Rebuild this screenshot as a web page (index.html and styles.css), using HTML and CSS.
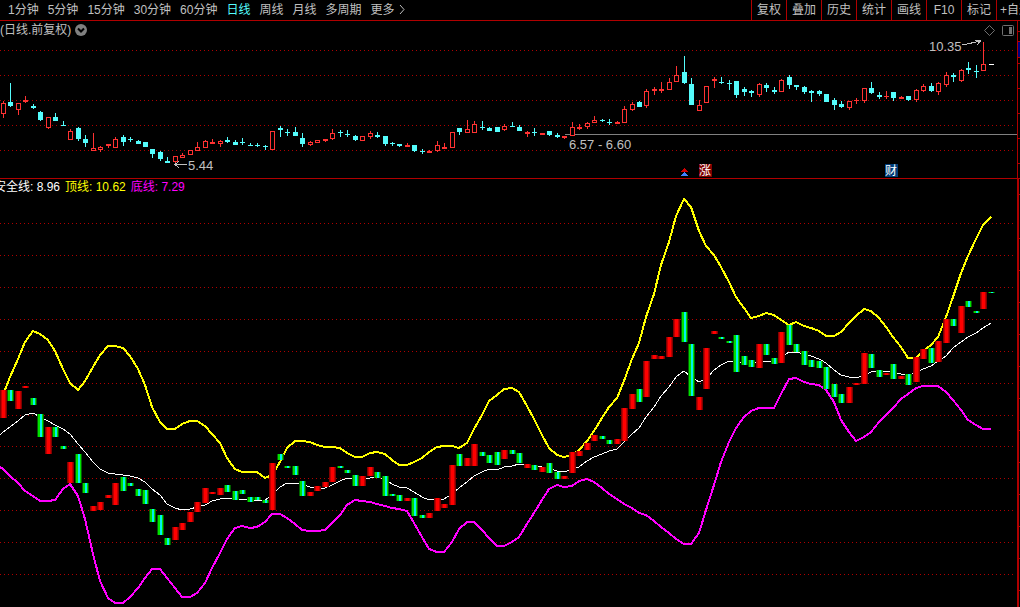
FILE: index.html
```
<!DOCTYPE html>
<html lang="zh-CN">
<head>
    <meta charset="UTF-8">
    <meta name="viewport" content="width=device-width, initial-scale=1.0">
    <title>日线</title>
    <link rel="stylesheet" href="styles.css">
</head>
<body>

    <div class="toolbar">
        <nav class="periods">
            <button>1分钟</button>
            <button>5分钟</button>
            <button>15分钟</button>
            <button>30分钟</button>
            <button>60分钟</button>
            <button class="active">日线</button>
            <button>周线</button>
            <button>月线</button>
            <button>多周期</button>
            <button class="more">更多<svg width="6" height="11" viewBox="0 0 6 11"><path d="M1 1l4 4.500-4 4.500"/></svg></button>
        </nav>
        <div class="tools">
            <button>复权</button>
            <button>叠加</button>
            <button>历史</button>
            <button>统计</button>
            <button>画线</button>
            <button>F10</button>
            <button>标记</button>
            <button class="watch">+自选</button>
        </div>
    </div>

    <div class="main">
        <div class="panes">
            <section class="pane price-pane">
                <div class="pane-head">
                    <span class="stock">(日线.前复权)</span>
                    <svg class="drop" width="12" height="12" viewBox="0 0 12 12"><circle cx="6" cy="6" r="6"/><path d="M3 4.500l3 3 3-3"/></svg>
                    <svg class="diamond" width="11" height="11" viewBox="0 0 11 11"><path d="M5.500 .5l5 5-5 5-5-5z"/></svg>
                    <svg class="panel" width="12" height="11" viewBox="0 0 12 11"><rect class="frame" x=".5" y=".5" width="11" height="10" rx="1"/><rect class="fill" x="7" y="2" width="3" height="7"/></svg>
                </div>
                <svg class="chart" id="priceChart"></svg>
            </section>
            <section class="pane line-pane">
                <div class="legend">
                    <span class="safe">安全线: 8.96</span>
                    <span class="top">顶线: 10.62</span>
                    <span class="bottom">底线: 7.29</span>
                </div>
                <svg class="chart" id="lineChart"></svg>
            </section>
        </div>
        <aside class="axis">
            <div class="axis-top"><span class="cursor-price"></span></div>
            <div class="axis-bottom"></div>
        </aside>
    </div>

    <script src="chart.js"></script>
</body>
</html>
```
FILE: styles.css
```
* {
    box-sizing: border-box;
}
body {
    margin: 0;
    height: 100vh;
    display: flex;
    flex-direction: column;
    overflow: hidden;
    background: #000;
    color: #c0c0c0;
    font-family: "Liberation Sans", "Noto Sans CJK SC", sans-serif;
    font-size: 12px;
}
button {
    background: none;
    border: none;
    padding: 0;
    color: inherit;
    font: inherit;
    line-height: 20px;
    white-space: nowrap;
    cursor: pointer;
}
.toolbar {
    display: flex;
    justify-content: space-between;
    height: 21px;
    flex: none;
    border-bottom: 1px solid #b00000;
}
.periods {
    display: flex;
    gap: 9px;
    padding-left: 8px;
}
.periods .active {
    color: #54fcfc;
}
.more svg {
    margin-left: 4px;
    vertical-align: -1px;
    fill: none;
    stroke: #c0c0c0;
}
.tools {
    display: flex;
    width: 269px;
    overflow: hidden;
}
.tools button {
    flex: none;
    width: 35px;
    border-left: 1px solid #b00000;
}
.tools .watch {
    width: 44px;
    padding-left: 3px;
    text-align: left;
}
.main {
    flex: 1;
    display: flex;
    min-height: 0;
}
.panes {
    flex: 1;
    min-width: 0;
    display: flex;
    flex-direction: column;
}
.pane {
    position: relative;
}
.price-pane {
    height: 158px;
    flex: none;
    border-bottom: 1px solid #b00000;
}
.line-pane {
    flex: 1;
    min-height: 0;
    overflow: hidden;
}
/* captions lie over the chart */
.pane-head,
.legend {
    position: absolute;
    left: 0;
    right: 0;
    top: 0;
    display: flex;
    align-items: center;
    line-height: 18px;
    white-space: nowrap;
}
.pane-head {
    padding-right: 3px;
}
.drop {
    margin-left: 4px;
    fill: #808080;
}
.drop path {
    fill: none;
    stroke: #000;
    stroke-width: 2;
}
.diamond {
    margin-left: auto;
    fill: none;
    stroke: #707070;
}
.panel {
    margin-left: 7px;
}
.frame {
    fill: none;
    stroke: #707070;
}
.fill {
    fill: #707070;
}
.legend {
    gap: 5px;
    margin-left: -6px;
    line-height: 16px;
}
.safe {
    color: #fff;
}
.top {
    color: #ff0;
}
.bottom {
    color: #f0f;
}
.chart {
    display: block;
    width: 100%;
    height: 100%;
    shape-rendering: crispEdges;
}
.chart text {
    fill: #c0c0c0;
    font-size: 13px;
}
.chart .badge-text {
    fill: #fff;
    font-size: 12px;
}
.grid {
    stroke: #b00000;
    stroke-dasharray: 1 3;
}
.wick-up {
    fill: #ff3232;
}
.body-up {
    fill: #000;
    stroke: #ff3232;
}
.down {
    fill: #54fcfc;
}
.flat {
    fill: #fff;
}
.cost {
    stroke: #808080;
}
.arrow {
    fill: none;
    stroke: #c0c0c0;
}
.line {
    fill: none;
    stroke-width: 2;
}
.line-safe {
    stroke: #fff;
    stroke-width: 1;
}
.line-top {
    stroke: #ff0;
}
.line-bottom {
    stroke: #f0f;
}
.axis {
    width: 3px;
    flex: none;
    display: flex;
    flex-direction: column;
    border-left: 1px solid #b00000;
}
.axis-top {
    height: 158px;
    padding-top: 20px;
    border-bottom: 1px solid #b00000;
    background: repeating-linear-gradient(#000 0 24px, #b00000 24px 25px) 0 18px;
}
.cursor-price {
    display: block;
    height: 17px;
    background: #000080;
    border-top: 1px solid #b00000;
    border-bottom: 1px solid #b00000;
}
.axis-bottom {
    flex: 1;
    border-left: 1px solid #b00000;
    background: repeating-linear-gradient(#000 0 31px, #b00000 31px 32px) 0 28px;
}
```
FILE: chart.js
```
// daily bars: [up, high, top of body, bottom of body, low]
const candles = [
    [1,101,103,114,118],[0,83,102,106,107],[1,103,103,110,115],[1,96,100,102,103],[0,104,106,108,109],
    [0,111,112,120,121],[1,117,117,128,129],[0,113,117,121,121],[0,121,125,126,126],[1,129,131,140,140],
    [0,127,128,139,141],[0,135,139,143,147],[1,133,148,151,151],[1,146,147,150,152],[1,144,144,146,148],
    [1,137,139,148,148],[0,135,137,142,146],[0,137,139,140,142],[0,140,141,144,144],[0,142,142,147,147],
    [0,149,149,154,158],[0,151,152,159,161],[0,157,161,163,163],[1,156,156,162,163],[1,153,155,158,158],
    [1,150,150,155,155],[1,142,147,151,151],[1,140,141,148,148],[1,139,142,144,144],[1,140,141,144,147],
    [0,137,140,142,143],[0,140,142,145,145],[0,138,142,143,145],[0,143,145,146,146],[0,143,145,146,147],
    [0,145,146,147,150],[1,131,131,150,150],[0,126,128,130,137],[0,129,132,133,136],[0,127,132,136,136],
    [0,133,138,144,147],[1,141,142,145,146],[1,140,140,143,143],[1,139,139,141,142],[1,129,133,139,140],
    [0,130,132,133,137],[0,130,134,135,137],[0,135,136,140,141],[1,136,136,141,141],[1,131,133,137,139],
    [0,132,135,137,138],[0,136,136,144,146],[0,142,143,144,146],[0,144,144,146,147],[1,143,145,147,147],
    [0,145,145,151,152],[0,149,151,152,154],[1,150,151,153,153],[1,141,145,151,152],[1,143,147,149,149],
    [1,132,132,148,148],[0,128,128,132,135],[1,120,129,133,133],[1,121,124,133,133],[0,121,127,128,130],
    [0,127,128,131,131],[0,127,127,132,132],[1,124,126,130,131],[0,122,126,127,127],[0,125,127,131,131],
    [1,131,132,134,137],[0,128,132,133,136],[1,133,133,135,135],[0,131,131,135,136],[0,133,135,137,138],
    [1,136,136,138,139],[1,122,127,136,136],[1,124,127,129,130],[1,122,123,127,129],[1,116,120,123,123],
    [0,119,120,121,122],[0,119,122,123,125],[1,121,122,124,124],[1,106,109,123,123],[1,102,104,110,111],
    [0,101,102,107,107],[1,89,91,106,108],[1,87,89,91,95],[1,82,89,91,93],[1,78,82,90,90],
    [1,66,75,82,82],[0,56,72,83,84],[0,78,84,105,105],[1,100,105,111,111],[1,86,86,103,103],
    [1,77,79,81,88],[0,77,82,83,84],[0,80,83,84,90],[0,81,81,95,98],[0,87,89,92,96],
    [0,90,91,93,97],[1,83,84,95,97],[0,83,85,88,92],[0,87,90,92,94],[1,79,80,92,92],
    [0,75,77,85,89],[0,85,85,87,90],[0,86,87,92,94],[0,90,91,93,102],[0,90,91,94,96],
    [0,94,94,102,102],[0,98,100,105,110],[0,101,104,107,108],[1,101,101,108,110],[1,98,100,101,104],
    [1,88,88,101,103],[0,82,88,93,94],[0,92,95,97,99],[1,91,96,97,99],[0,92,92,98,101],
    [1,96,97,99,99],[0,96,96,100,101],[1,89,90,100,102],[1,84,86,91,92],[0,83,86,91,92],
    [1,82,83,92,95],[1,72,75,85,87],[0,73,75,77,82],[1,69,70,81,82],[0,62,68,70,74],
    [0,65,71,72,78],[1,42,64,71,71],[2,64,64,65,65]
];

// indicator columns: [up, top, bottom]
const columns = [
    [1,390,418],[0,390,401],[1,391,409],[1,386,388],[0,398,405],[0,414,437],[1,427,454],[0,427,437],[0,446,449],[1,462,483],
    [0,454,483],[0,483,493],[1,506,511],[1,502,510],[1,495,498],[1,483,505],[0,477,491],[0,483,486],[0,489,496],[0,490,504],
    [0,509,522],[0,515,535],[0,538,545],[1,527,540],[1,523,530],[1,512,522],[1,502,512],[1,488,503],[1,492,494],[1,488,495],
    [0,485,492],[0,491,500],[0,490,494],[0,497,502],[0,497,500],[0,500,503],[1,463,510],[0,454,460],[0,466,468],[0,466,475],
    [0,481,496],[1,492,496],[1,486,491],[1,482,487],[1,467,482],[0,466,468],[0,470,473],[0,475,486],[1,476,486],[1,467,476],
    [0,472,478],[0,476,496],[0,494,496],[0,495,501],[1,498,501],[0,498,516],[0,515,518],[1,513,518],[1,498,511],[1,504,508],
    [1,465,505],[0,454,466],[1,458,466],[1,444,466],[0,452,456],[0,455,463],[0,452,465],[1,450,459],[0,450,454],[0,453,463],
    [1,464,468],[0,465,470],[1,467,472],[0,463,473],[0,472,479],[1,476,479],[1,452,473],[1,451,456],[1,443,450],[1,435,441],
    [0,436,439],[0,440,444],[1,439,444],[1,408,441],[1,394,409],[0,389,402],[1,361,397],[1,355,359],[1,356,359],[1,337,357],
    [1,319,337],[0,312,342],[0,344,396],[1,397,410],[1,348,389],[1,331,334],[0,337,339],[0,341,343],[0,335,372],[0,356,365],
    [0,360,367],[1,344,368],[0,344,355],[0,358,364],[1,332,363],[0,325,345],[0,344,352],[0,351,365],[0,360,367],[0,361,368],
    [0,367,389],[0,384,397],[0,394,403],[1,387,403],[1,383,385],[1,353,384],[0,354,368],[0,370,377],[1,373,375],[0,364,379],
    [1,376,379],[0,374,385],[1,357,382],[1,349,359],[0,348,363],[1,341,362],[1,319,343],[0,319,326],[1,306,333],[0,301,307],
    [0,311,313],[1,292,309],[0,292,293]
];

const topLine = [
    395,377,359,342,331,334,340,351,369,383,390,381,367,355,346,346,348,356,369,385,407,422,429,429,424,421,421,426,434,443,
    458,469,472,472,472,478,475,462,448,441,441,442,445,447,447,448,453,457,457,453,452,454,460,465,465,462,458,452,447,446,
    446,448,443,429,415,401,395,389,388,392,406,419,435,448,455,457,455,450,441,431,418,407,398,381,359,343,317,294,265,242,
    216,199,207,231,246,255,267,282,297,308,318,316,313,315,320,325,322,326,328,331,336,336,332,323,316,309,311,318,327,337,
    347,358,358,351,345,337,317,297,273,256,239,225,217
];
const safeLine = [
    432,427,421,415,413,417,421,425,429,434,444,452,462,469,473,474,475,476,478,482,489,495,504,508,510,509,507,505,501,499,
    498,499,499,500,501,500,495,487,483,483,484,487,488,488,485,481,478,479,478,478,477,479,484,487,488,492,497,500,499,499,
    494,488,482,476,472,469,470,467,466,464,465,466,467,468,471,472,469,467,461,457,454,451,449,442,434,428,417,407,396,387,
    377,371,377,382,379,370,365,361,361,363,364,362,361,361,357,352,352,354,356,359,363,370,375,377,378,375,372,371,371,372,
    374,375,373,369,366,361,356,348,342,337,333,328,323
];
const bottomLine = [
    469,476,483,491,496,501,501,500,489,484,496,519,554,581,598,603,603,597,588,578,569,569,578,588,597,597,593,583,568,553,
    539,528,526,528,527,522,514,514,518,524,530,531,531,530,523,515,505,500,501,502,504,506,508,509,511,523,537,549,552,552,
    542,529,522,522,530,538,546,546,542,537,524,513,500,489,485,487,486,481,479,482,488,494,499,504,508,513,515,521,527,533,
    539,544,544,533,510,485,462,442,428,417,411,408,408,408,394,379,378,382,384,385,390,402,420,432,441,437,432,422,415,408,
    399,394,388,386,386,386,392,400,410,420,425,429,429
];

const PRICE_TOP = 21;
const LINE_TOP = 179;
const priceChart = document.getElementById('priceChart');
const lineChart = document.getElementById('lineChart');

function add(svg, tag, attrs, text) {
    const el = document.createElementNS('http://www.w3.org/2000/svg', tag);
    for (const name in attrs) {
        el.setAttribute(name, attrs[name]);
    }
    if (text) {
        el.textContent = text;
    }
    svg.appendChild(el);
}

function rect(svg, x, y, width, height, attrs) {
    add(svg, 'rect', Object.assign({ x, y, width, height }, attrs));
}

function drawGrid(svg, rows, width) {
    rows.forEach(y => add(svg, 'path', { class: 'grid', d: `M0 ${y + 0.5}H${width - 4}` }));
}

function drawPrice(width, xOf) {
    const svg = priceChart;
    svg.innerHTML = '';
    drawGrid(svg, [29, 54, 79, 104, 129], width);
    add(svg, 'path', { class: 'cost', d: `M${xOf(75) + 1} 113.5H${width}` });

    candles.forEach(([up, high, top, bottom, low], i) => {
        const x = xOf(i);
        const color = ['down', 'wick-up', 'flat'][up];
        rect(svg, x, high - PRICE_TOP, 1, low - high, { class: color });
        if (up === 1 && bottom - top > 2) {
            rect(svg, x - 1.5, top - PRICE_TOP + 0.5, 4, bottom - top - 1, { class: 'body-up' });
        } else {
            rect(svg, x - 2, top - PRICE_TOP, 5, bottom - top, { class: color });
        }
    });

    // lowest and highest price
    const lowX = xOf(23);
    const highX = xOf(131);
    rect(svg, lowX, 142, 2, 3, { fill: '#c0c0c0' });
    add(svg, 'path', { class: 'arrow', d: `M${lowX + 12} 143.5H${lowX}M${lowX + 4} 140l-4 3.5 4 3.500` });
    add(svg, 'text', { x: lowX + 13, y: 149 }, '5.44');
    add(svg, 'path', { class: 'arrow', d: `M${highX - 21} 24l19-4m-6-1h6l-4 5` });
    add(svg, 'text', { x: highX - 54, y: 30 }, '10.35');
    add(svg, 'text', { x: xOf(76) - 3, y: 128 }, '6.57 - 6.60');

    // event marks
    const markX = xOf(91);
    add(svg, 'path', { fill: '#d00000', d: `M${markX - 4} 151l4-4 4 4z` });
    add(svg, 'path', { fill: '#4080ff', d: `M${markX - 4} 155l4-4 4 4z` });
    rect(svg, markX + 15, 143, 13, 13, { fill: '#800000' });
    add(svg, 'text', { class: 'badge-text', x: markX + 15, y: 154 }, '涨');
    rect(svg, xOf(119) - 8, 143, 13, 13, { fill: '#003c78' });
    add(svg, 'text', { class: 'badge-text', x: xOf(119) - 8, y: 154 }, '财');
}

function drawLine(values, start, className, xOf) {
    const points = values.map((y, i) => `${xOf(i)},${y - LINE_TOP}`);
    if (start) {
        points.unshift(`0,${start - LINE_TOP}`);
    }
    add(lineChart, 'polyline', { class: 'line ' + className, points: points.join(' ') });
}

function drawIndicator(width, xOf) {
    const svg = lineChart;
    svg.innerHTML = '';
    drawGrid(svg, [44, 76, 108, 140, 172, 204, 236, 267, 299, 331, 363, 395], width);
    drawLine(safeLine, 435, 'line-safe', xOf);
    drawLine(topLine, 0, 'line-top', xOf);
    drawLine(bottomLine, 467, 'line-bottom', xOf);

    columns.forEach(([up, top, bottom], i) => {
        const shades = up ? ['#800000', '#c00000', '#ff0000'] : ['#006000', '#00e000', '#00f0f0'];
        const x = xOf(i);
        const y = top - LINE_TOP;
        const h = bottom - top;
        rect(svg, x - 3, y, 7, h, { fill: shades[0] });
        rect(svg, x - 2, y, 5, h, { fill: shades[1] });
        rect(svg, up ? x - 1 : x, y, up ? 3 : 2, h, { fill: shades[2] });
    });
}

function draw() {
    const width = priceChart.clientWidth;
    const step = (width - 29) / (candles.length - 1);
    const xOf = i => Math.floor(3.3 + i * step);
    drawPrice(width, xOf);
    drawIndicator(width, xOf);
}

window.addEventListener('resize', draw);
draw();
```
